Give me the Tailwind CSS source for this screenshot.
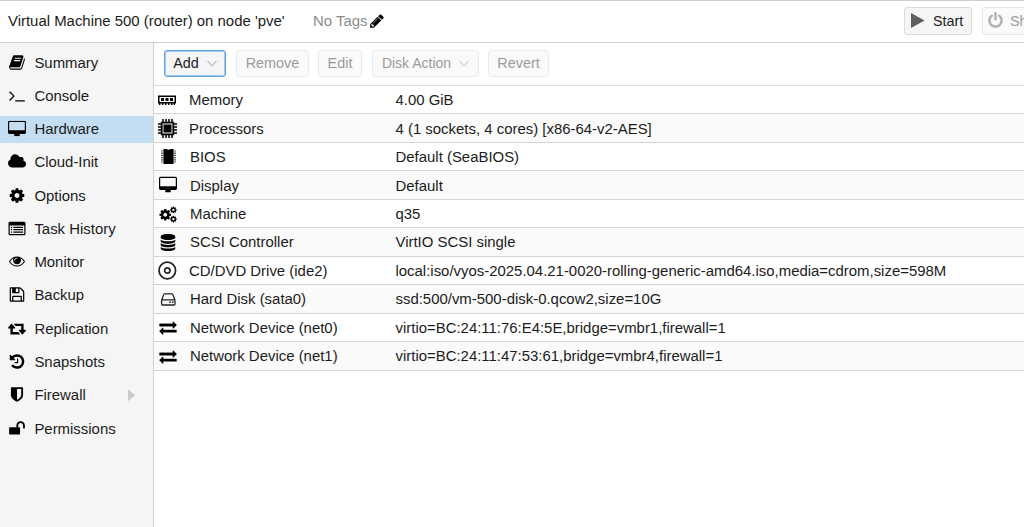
<!DOCTYPE html>
<html lang="en">
<head>
<meta charset="utf-8">
<title>Virtual Machine 500</title>
<script src="https://cdn.jsdelivr.net/npm/@tailwindcss/browser@4"></script>
</head>
<body class="h-[527px] w-[1024px] overflow-hidden bg-white font-['Liberation_Sans',Arial,sans-serif] text-[14.93px] leading-[18px] text-[#1c1c1c] whitespace-nowrap">
<svg class="hidden">
<symbol id="desktop" viewBox="0 0 1920 1664"><path d="M1792 992v-832q0-13-9.500-22.500t-22.500-9.500h-1600q-13 0-22.500 9.500t-9.500 22.500v832q0 13 9.500 22.500t22.500 9.500h1600q13 0 22.500-9.500t9.500-22.500zm128-832v1088q0 66-47 113t-113 47h-544q0 37 16 77.500t32 71 16 43.500q0 26-19 45t-45 19h-512q-26 0-45-19t-19-45q0-14 16-44t32-70 16-78h-544q-66 0-113-47t-47-113v-1088q0-66 47-113t113-47h1600q66 0 113 47t47 113z"/></symbol>
<symbol id="cog" viewBox="0 0 1792 1792"><path d="M1152 896q0-106-75-181t-181-75-181 75-75 181 75 181 181 75 181-75 75-181zm512-109v222q0 12-8 23t-20 13l-185 28q-19 54-39 91 35 50 107 138 10 12 10 25t-9 23q-27 37-99 108t-94 71q-12 0-26-9l-138-108q-44 23-91 38-16 136-29 186-7 28-36 28h-222q-14 0-24.500-8.500t-11.500-21.500l-28-184q-49-16-90-37l-141 107q-10 9-25 9-14 0-25-11-126-114-165-168-7-10-7-23 0-12 8-23 15-21 51-66.500t54-70.500q-27-50-41-99l-183-27q-13-2-21-12.500t-8-23.500v-222q0-12 8-23t19-13l186-28q14-46 39-92-40-57-107-138-10-12-10-24 0-10 9-23 26-36 98.500-107.500t94.500-71.500q13 0 26 10l138 107q44-23 91-38 16-136 29-186 7-28 36-28h222q14 0 24.500 8.500t11.500 21.500l28 184q49 16 90 37l142-107q9-9 24-9 13 0 25 10 129 119 165 170 7 8 7 22 0 12-8 23-15 21-51 66.500t-54 70.500q26 50 41 98l183 28q13 2 21 12.500t8 23.500z"/></symbol>
<symbol id="exchange" viewBox="0 0 1792 1792"><path stroke="#000" stroke-width="40" d="M1792 1184v192q0 13-9.500 22.500t-22.500 9.500h-1376v192q0 13-9.500 22.500t-22.500 9.500q-12 0-24-10l-319-320q-9-9-9-22 0-14 9-23l320-320q9-9 23-9 13 0 22.500 9.500t9.500 22.500v192h1376q13 0 22.500 9.500t9.500 22.500zm0-544q0 14-9 23l-320 320q-9 9-23 9-13 0-22.500-9.500t-9.500-22.500v-192h-1376q-13 0-22.500-9.500t-9.500-22.500v-192q0-13 9.500-22.500t22.500-9.500h1376v-192q0-14 9-23t23-9q12 0 24 10l319 319q9 9 9 23z"/></symbol>
</svg>

<header class="flex h-[43px] items-center border-t border-b border-[#cfcfcf] pb-[2px] pl-2">
  <div class="w-[305px]">Virtual Machine 500 (router) on node 'pve'</div>
  <div class="flex items-center gap-[2px] text-[#8c8c8c]"><span>No Tags</span>
    <svg class="size-[16px] text-black" fill="currentColor" viewBox="0 0 1792 1792"><path d="M491 1536l91-91-235-235-91 91v107h128v128h107zm523-928q0-22-22-22-10 0-17 7l-542 542q-7 7-7 17 0 22 22 22 10 0 17-7l542-542q7-7 7-17zm-54-192l416 416-832 832h-416v-416zm683 96q0 53-37 90l-166 166-416-416 166-165q36-38 90-38 53 0 91 38l235 234q37 39 37 91z"/></svg>
  </div>
  <div class="ml-auto flex w-[120px] shrink-0 gap-[10px] overflow-hidden">
    <button class="flex h-7 w-[68px] shrink-0 items-center rounded-[3px] border border-[#dcdcdc] bg-[#f5f5f5] pl-[6px] text-[14.3px]"><svg class="mr-2 h-[15px] w-[14px]" viewBox="0 0 14 15"><path d="M0 0l13.500 7.500L0 15z" fill="#606060"/></svg>Start</button>
    <button class="flex h-7 w-[110px] shrink-0 items-center rounded-[3px] border border-[#e8e8e8] bg-[#fafafa] pl-[4px] text-[14.3px] text-[#9a9a9a]"><svg class="mr-[6px] size-[17px]" fill="#b0b0b0" viewBox="0 0 1792 1792"><path d="M1664 896q0 156-61 298t-164 245-245 164-298 61-298-61-245-164-164-245-61-298q0-182 80.500-343t226.500-270q43-32 95.500-25t83.500 50q32 42 24.500 94.500t-49.500 84.500q-98 74-151.500 181t-53.500 228q0 104 40.500 198.500t109.500 163.500 163.500 109.500 198.500 40.500 198.500-40.500 163.500-109.500 109.500-163.500 40.500-198.500q0-121-53.500-228t-151.500-181q-42-32-49.500-84.500t24.500-94.500q31-43 84-50t95 25q146 109 226.500 270t80.500 343zm-640-768v640q0 52-38 90t-90 38-90-38-38-90v-640q0-52 38-90t90-38 90 38 38 90z"/></svg>Shutdown</button>
  </div>
</header>

<div class="flex h-[484px]">
  <nav class="w-[154px] shrink-0 border-r border-[#d2d2d2] bg-[#f5f5f5] pt-[3px] [&>div]:flex [&>div]:h-[33.28px] [&>div]:items-center [&>div]:pl-2 [&>div>svg]:mr-[8.4px] [&>div>svg]:mb-px [&>div>svg]:h-[17px] [&>div>svg]:w-[18px] [&>div>svg]:fill-black">
    <div><svg viewBox="0 0 1792 1792"><path d="M1703 478q40 57 18 129l-275 906q-19 64-76.500 107.500t-122.500 43.500h-923q-77 0-148.500-53.500t-99.500-131.500q-24-67-2-127 0-4 3-27t4-37q1-8-3-21.500t-3-19.500q2-11 8-21t16.500-23.500 16.500-23.500q23-38 45-91.500t30-91.500q3-10 .5-30t-.5-28q3-11 17-28t17-23q21-36 42-92t25-90q1-9-2.500-32t.5-28q4-13 22-30.500t22-22.500q19-26 42.500-84.500t27.500-96.500q1-8-3-25.500t-2-26.500q2-8 9-18t18-23 17-21q8-12 16.500-30.500t15-35 16-36 19.500-32 26.500-23.500 36-11.500 47.500 5.500l-1 3q38-9 51-9h761q74 0 114 56t18 130l-274 906q-36 119-71.500 153.500t-128.500 34.500h-869q-27 0-38 15-11 16-1 43 24 70 144 70h923q29 0 56-15.500t35-41.500l300-987q7-22 5-57 38 15 59 43zm-1064 2q-4 13 2 22.500t20 9.500h608q13 0 25.500-9.500t16.500-22.500l21-64q4-13-2-22.500t-20-9.500h-608q-13 0-25.500 9.500t-16.500 22.500zm-83 256q-4 13 2 22.500t20 9.500h608q13 0 25.500-9.500t16.500-22.500l21-64q4-13-2-22.500t-20-9.500h-608q-13 0-25.500 9.500t-16.500 22.500z"/></svg><span>Summary</span></div>
    <div><svg viewBox="0 0 1792 1792"><path d="M649 983l-466 466q-10 10-23 10t-23-10l-50-50q-10-10-10-23t10-23l393-393-393-393q-10-10-10-23t10-23l50-50q13-10 23-10t23 10l466 466q10 10 10 23t-10 23zm1079 457v64q0 14-9 23t-23 9h-960q-14 0-23-9t-9-23v-64q0-14 9-23t23-9h960q14 0 23 9t9 23z"/></svg><span>Console</span></div>
    <div class="bg-[#c3def2] bg-clip-content! p-0! py-[3px]!"><svg class="ml-2 mb-[2px]!" viewBox="0 0 1920 1664"><use href="#desktop"/></svg><span>Hardware</span></div>
    <div><svg viewBox="0 0 1920 1792"><path d="M1920 1152q0 159-112.500 271.500t-271.500 112.500h-1088q-185 0-316.500-131.500t-131.500-316.500q0-132 71-241.500t187-163.500q-2-28-2-43 0-212 150-362t362-150q158 0 286.500 88t187.500 230q70-62 166-62 106 0 181 75t75 181q0 75-41 138 129 30 213 134.500t84 239.500z"/></svg><span>Cloud-Init</span></div>
    <div><svg viewBox="0 0 1792 1792"><use href="#cog"/></svg><span>Options</span></div>
    <div><svg viewBox="0 0 1792 1792"><path fill-rule="evenodd" d="M160 192h1472q160 0 160 160v1088q0 160-160 160H160Q0 1600 0 1440V352Q0 192 160 192zM128 576v864q0 32 32 32h1472q32 0 32-32V576zM256 704h128v128H256zM512 704h1024v128H512zM256 960h128v128H256zM512 960h1024v128H512zM256 1216h128v128H256zM512 1216h1024v128H512z"/></svg><span>Task History</span></div>
    <div><svg viewBox="0 0 1792 1920"><path d="M1664 960q-152-236-381-353 61 104 61 225 0 185-131.500 316.500t-316.500 131.500-316.500-131.500-131.500-316.500q0-121 61-225-229 117-381 353 133 205 333.500 326.500t434.500 121.500 434.500-121.500 333.500-326.500zm-720-384q0-20-14-34t-34-14q-125 0-214.500 89.500t-89.500 214.500q0 20 14 34t34 14 34-14 14-34q0-86 61-147t147-61q20 0 34-14t14-34zm848 384q0 34-20 69-140 230-376.500 368.500t-499.500 138.500-499.500-139-376.500-368q-20-35-20-69t20-69q140-229 376.500-368t499.500-139 499.500 139 376.500 368q20 35 20 69z"/></svg><span>Monitor</span></div>
    <div><svg viewBox="0 0 1792 1792"><path d="M512 1536h768v-384h-768v384zm896 0h128v-896q0-14-10-38.500t-20-34.500l-281-281q-10-10-34-20t-39-10v416q0 40-28 68t-68 28h-576q-40 0-68-28t-28-68v-416h-128v1280h128v-416q0-40 28-68t68-28h832q40 0 68 28t28 68v416zm-384-928v-320q0-13-9.500-22.500t-22.500-9.500h-192q-13 0-22.500 9.500t-9.500 22.500v320q0 13 9.500 22.500t22.500 9.500h192q13 0 22.500-9.500t9.500-22.500zm640 32v928q0 40-28 68t-68 28h-1344q-40 0-68-28t-28-68v-1344q0-40 28-68t68-28h928q40 0 88 20t76 48l280 280q28 28 48 76t20 88z"/></svg><span>Backup</span></div>
    <div><svg viewBox="0 0 1920 1792"><path d="M1280 1504q0 13-9.500 22.500t-22.500 9.500h-960q-8 0-13.500-2t-9-7-5.500-8-3-11.500-1-11.500v-600h-192q-26 0-45-19t-19-45q0-24 15-41l320-384q19-22 49-22t49 22l320 384q15 17 15 41 0 26-19 45t-45 19h-192v384h576q16 0 25 11l160 192q7 10 7 21zm640-416q0 24-15 41l-320 384q-20 23-49 23t-49-23l-320-384q-15-17-15-41 0-26 19-45t45-19h192v-384h-576q-16 0-25-12l-160-192q-7-9-7-20 0-13 9.500-22.500t22.500-9.500h960q8 0 13.500 2t9 7 5.500 8 3 11.500 1 11.500v600h192q26 0 45 19t19 45z"/></svg><span>Replication</span></div>
    <div><svg viewBox="0 0 1792 1792"><path d="M1664 896q0 156-61 298t-164 245-245 164-298 61q-172 0-327-72.500t-264-204.500q-7-10-6.500-22.500t8.500-20.500l137-138q10-9 25-9 16 2 23 12 73 95 179 147t225 52q104 0 198.500-40.500t163.500-109.500 109.500-163.500 40.500-198.500-40.500-198.500-109.500-163.500-163.500-109.500-198.500-40.500q-98 0-188 35.500t-160 101.500l137 138q31 30 14 69-17 40-59 40h-448q-26 0-45-19t-19-45v-448q0-42 40-59 39-17 69 14l130 129q107-101 244.500-156.500t284.500-55.500q156 0 298 61t245 164 164 245 61 298zm-640-288v448q0 14-9 23t-23 9h-320q-14 0-23-9t-9-23v-64q0-14 9-23t23-9h224v-352q0-14 9-23t23-9h64q14 0 23 9t9 23z"/></svg><span>Snapshots</span></div>
    <div><svg viewBox="0 0 1792 1792"><path d="M1344 960v-640h-448v1137q119-63 213-137 235-184 235-360zm192-768v768q0 86-33.500 170.500t-83 150-118 127.500-126.500 103-121 77.500-89.500 49.500-42.500 20q-12 6-26 6t-26-6q-16-7-42.500-20t-89.500-49.500-121-77.500-126.500-103-118-127.500-83-150-33.500-170.500v-768q0-26 19-45t45-19h1152q26 0 45 19t19 45z"/></svg><span>Firewall</span><i class="mr-[18px] ml-auto h-[12px] w-[7px] bg-[#cbcbcb] [clip-path:polygon(0_0,100%_50%,0_100%)]"></i></div>
    <div><svg viewBox="0 0 1792 1792"><path d="M1728 576v256q0 26-19 45t-45 19h-64q-26 0-45-19t-19-45v-256q0-106-75-181t-181-75-181 75-75 181v192h96q40 0 68 28t28 68v576q0 40-28 68t-68 28h-960q-40 0-68-28t-28-68v-576q0-40 28-68t68-28h672v-192q0-185 131.500-316.500t316.500-131.500 316.500 131.500 131.500 316.500z"/></svg><span>Permissions</span></div>
  </nav>

  <main class="min-w-0 flex-1">
    <div class="flex h-[43px] items-center border-b border-[#dcdcdc] pb-[2px] pl-[10px] text-[14.4px] text-[#9a9a9a] [&>button]:flex [&>button]:h-[27px] [&>button]:items-center [&>button]:justify-center [&>button]:rounded-[3px] [&>button]:border [&>button]:border-[#ebebeb] [&>button]:bg-[#fafafa]">
      <button class="w-[62px] gap-2 border-[#5fa2dd]! bg-[#f5f5f5]! text-[#1c1c1c] shadow-[inset_0_0_0_1px_#a5cbec]">Add<svg class="h-[7px] w-[10px]" viewBox="0 0 10 7" fill="none" stroke="#c4c4c4" stroke-width="1.500"><path d="M.5 1L5 5.700 9.500 1"/></svg></button>
      <button class="ml-[10px] w-[73px]">Remove</button>
      <button class="ml-[9px] w-[44px]">Edit</button>
      <button class="ml-[10px] w-[107px] gap-[8px] text-[14px]">Disk Action<svg class="h-[7px] w-[10px]" viewBox="0 0 10 7" fill="none" stroke="#d8d8d8" stroke-width="1.500"><path d="M.5 1L5 5.700 9.500 1"/></svg></button>
      <button class="ml-[9px] w-[61px]">Revert</button>
    </div>
    <div class="[&>div]:grid [&>div]:h-[28.47px] [&>div]:grid-cols-[36px_205.500px_1fr] [&>div]:items-center [&>div]:border-b [&>div]:border-[#d4d4d4] [&>div]:pt-[0.8px] [&>div:nth-child(even)]:bg-[#fafafa] [&>div>svg]:ml-[5px] [&>div>svg]:h-[17px] [&>div>svg]:w-[18px]">
      <div><svg class="ml-[4px]!" viewBox="0 0 18 17"><path fill-rule="evenodd" d="M0 3.500h18v8H0zM1.500 5v5h15V5z"/><path d="M3 6h3v3H3zM7.500 6h3v3h-3zM12 6h3v3h-3zM1 11h1.500v2H1zM4 11h1.500v2H4zM7 11h1.500v2H7zM10 11h1.500v2H10zM13 11h1.500v2H13zM15.700 11h1.300v2h-1.300z"/></svg><span class="-ml-px">Memory</span><span>4.00 GiB</span></div>
      <div><svg class="ml-[4px]! h-[19px]! w-[19px]!" viewBox="0 0 19 19"><path fill="none" stroke="#000" stroke-width="1.800" d="M3.700 3.700h11.600v11.600H3.700z"/><path d="M5.500 5.500h8v8h-8z"/><path stroke="#000" stroke-width="1.500" d="M5 0v3M8 0v3M11 0v3M14 0v3M5 16v3M8 16v3M11 16v3M14 16v3M0 5h3M0 8h3M0 11h3M0 14h3M16 5h3M16 8h3M16 11h3M16 14h3"/></svg><span class="-ml-px">Processors</span><span>4 (1 sockets, 4 cores) [x86-64-v2-AES]</span></div>
      <div><svg class="-mt-[2px]" viewBox="0 0 18 17"><path d="M4.500 1h3q2 1.500 4 0h3v15h-10z"/><path stroke="#555" stroke-width="1.200" d="M2 3h3M2 5.200h3M2 7.400h3M2 9.600h3M2 11.800h3M2 14h3M14 3h3M14 5.200h3M14 7.400h3M14 9.600h3M14 11.800h3M14 14h3"/></svg><span>BIOS</span><span>Default (SeaBIOS)</span></div>
      <div><svg class="-mt-[2px]"><use href="#desktop"/></svg><span>Display</span><span>Default</span></div>
      <div><svg viewBox="0 0 18 17"><use href="#cog" x="-.5" y="2" width="13.500" height="13.500"/><use href="#cog" x="10.500" y="0" width="7.800" height="7.800"/><use href="#cog" x="10.500" y="9.200" width="7.800" height="7.800"/></svg><span>Machine</span><span>q35</span></div>
      <div><svg viewBox="0 0 1792 1792"><path d="M896 768q237 0 443-43t325-127v170q0 69-103 128t-280 93.500-385 34.500-385-34.500-280-93.500-103-128v-170q119 84 325 127t443 43zm0 768q237 0 443-43t325-127v170q0 69-103 128t-280 93.500-385 34.500-385-34.500-280-93.500-103-128v-170q119 84 325 127t443 43zm0-384q237 0 443-43t325-127v170q0 69-103 128t-280 93.500-385 34.500-385-34.500-280-93.500-103-128v-170q119 84 325 127t443 43zm0-1152q208 0 385 34.500t280 93.500 103 128v128q0 69-103 128t-280 93.500-385 34.500-385-34.500-280-93.500-103-128v-128q0-69 103-128t280-93.500 385-34.500z"/></svg><span>SCSI Controller</span><span>VirtIO SCSI single</span></div>
      <div><svg class="ml-[4px]! h-[19px]! w-[19px]!" viewBox="0 0 19 19" fill="none" stroke="#222" stroke-width="1.700"><circle cx="9.300" cy="9.500" r="8.300"/><circle cx="9.300" cy="9.500" r="2.700"/></svg><span class="-ml-px">CD/DVD Drive (ide2)</span><span>local:iso/vyos-2025.04.21-0020-rolling-generic-amd64.iso,media=cdrom,size=598M</span></div>
      <div><svg viewBox="0 0 18 17" fill="none" stroke="#222" stroke-width="1.300"><path d="M2.600 9.200L4.800 3.400Q5 2.800 5.800 2.800h7q.8 0 1 .6L16 9.200M3.600 8.800h11.400q1 0 1 1v3.200q0 1-1 1H3.600q-1 0-1-1V9.800q0-1 1-1z"/><path stroke="none" fill="#222" d="M10.300 10.500h1.600v1.600h-1.600zM12.900 10.500h1.600v1.600h-1.600z"/></svg><span>Hard Disk (sata0)</span><span>ssd:500/vm-500-disk-0.qcow2,size=10G</span></div>
      <div><svg><use href="#exchange"/></svg><span>Network Device (net0)</span><span>virtio=BC:24:11:76:E4:5E,bridge=vmbr1,firewall=1</span></div>
      <div><svg><use href="#exchange"/></svg><span>Network Device (net1)</span><span>virtio=BC:24:11:47:53:61,bridge=vmbr4,firewall=1</span></div>
    </div>
  </main>
</div>
</body>
</html>
